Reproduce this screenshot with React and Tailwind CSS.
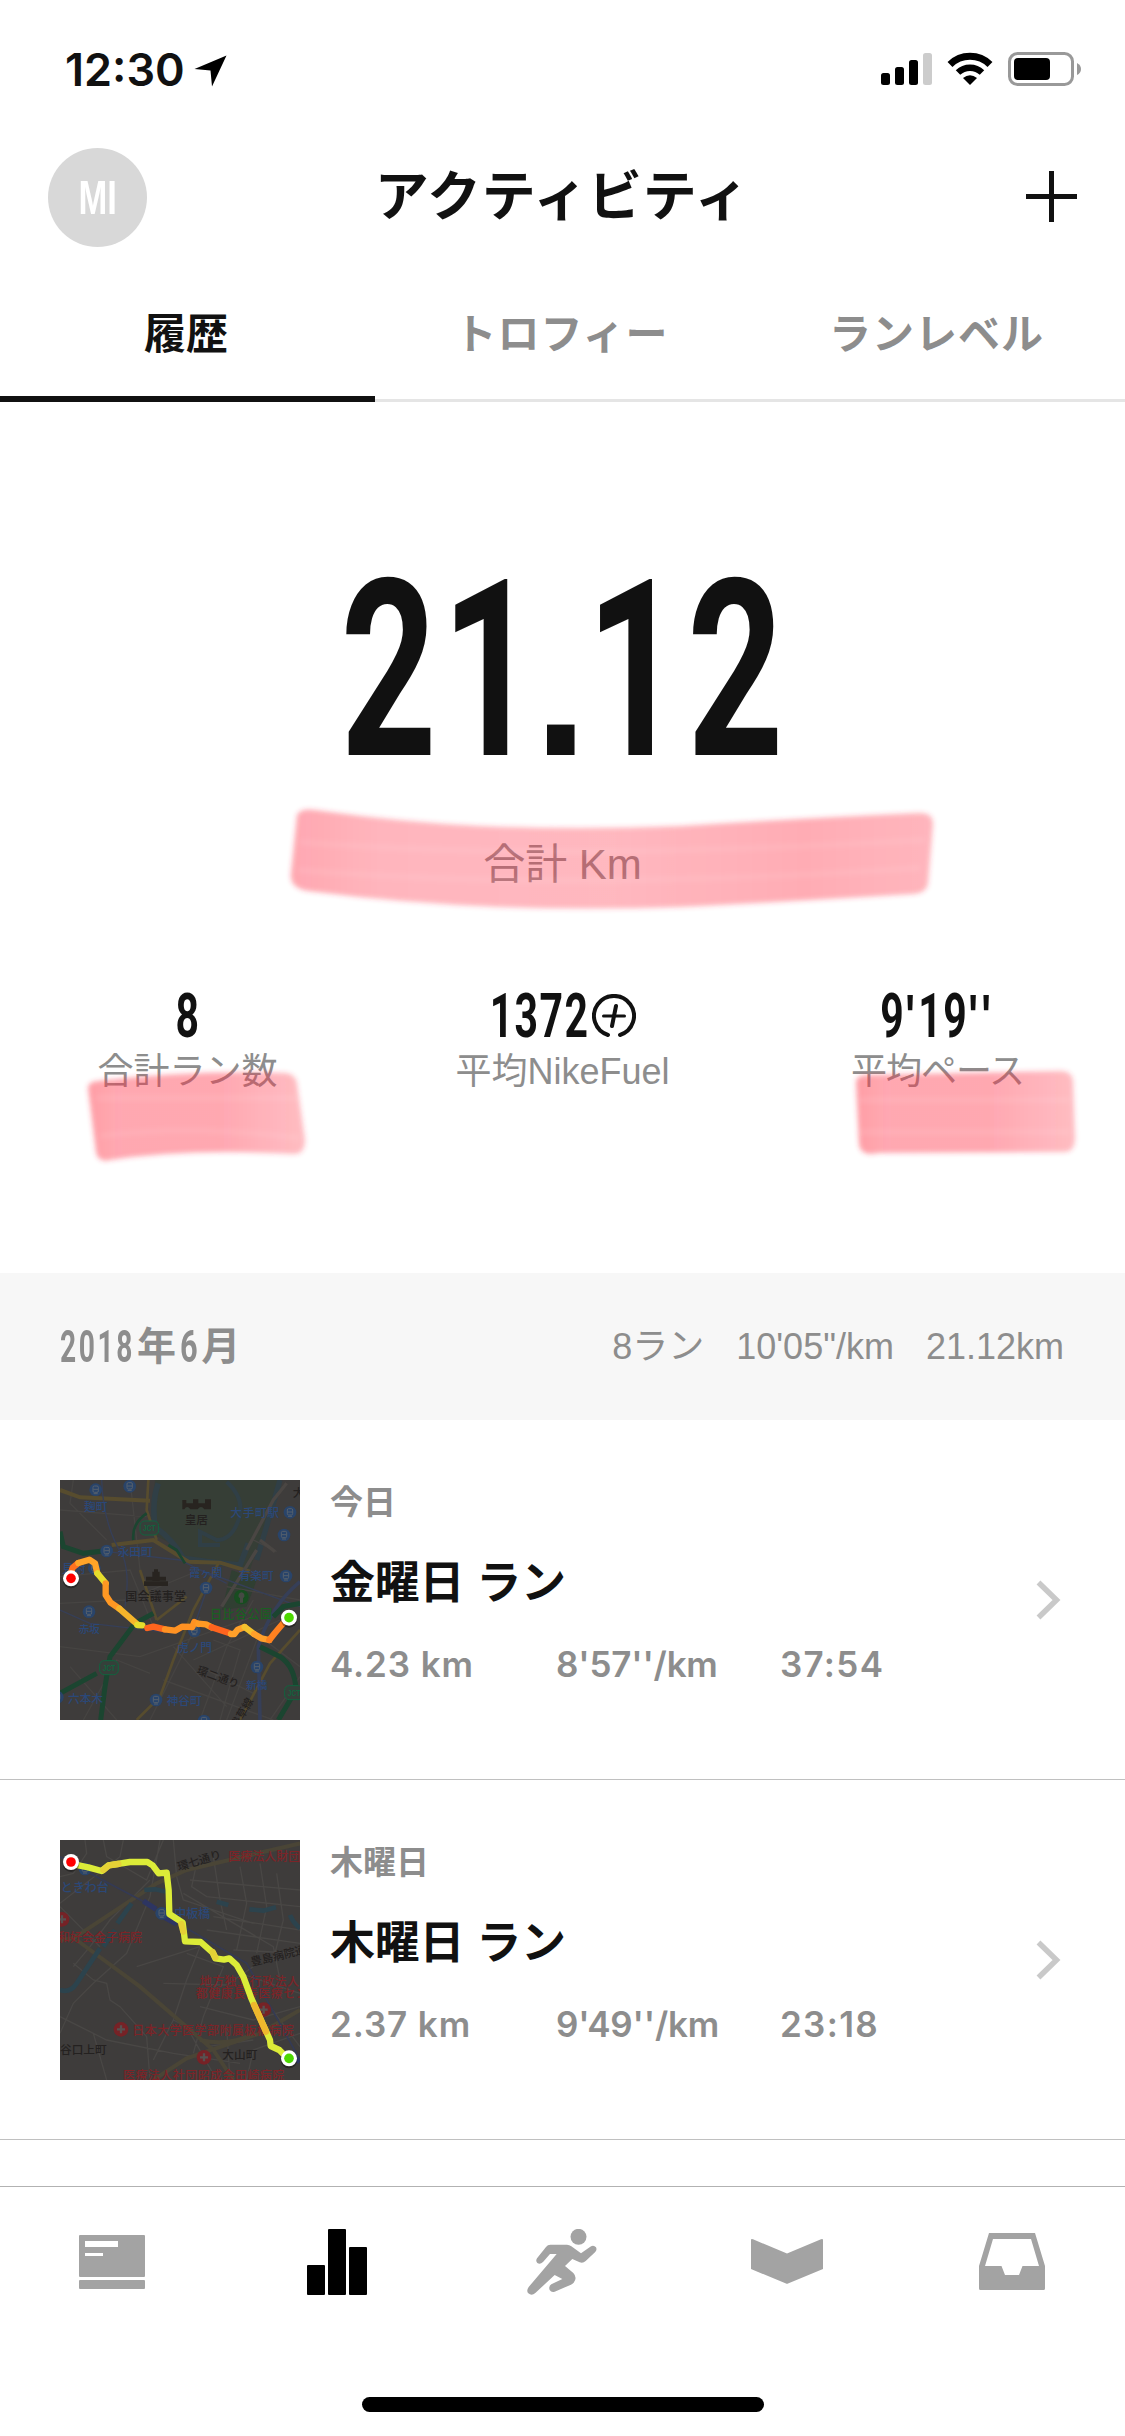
import { useState } from 'react';

const tabs = ['履歴', 'トロフィー', 'ランレベル'];

const runs = [
  { id: 1, day: '今日', title: '金曜日 ラン', distance: '4.23 km', pace: "8'57''/km", time: '37:54', Map: ChiyodaMap },
  { id: 2, day: '木曜日', title: '木曜日 ラン', distance: '2.37 km', pace: "9'49''/km", time: '23:18', Map: ItabashiMap },
];

function StatusBar() {
  return (
    <div className="flex h-[132px] shrink-0 items-center justify-between pl-[65px] pr-[42px] pt-[6px]">
      <div className="flex items-center gap-[9px]">
        <span className="font-['Inter'] text-[45px] font-semibold leading-none">12:30</span>
        <svg className="mt-[4px] h-[32px] w-[33px]" viewBox="0 0 33 32">
          <path d="M32.500 0.500L18 31.500L16.500 15.500L0.500 14z" />
        </svg>
      </div>
      <div className="flex items-center">
        <svg className="h-[34px] w-[52px]" viewBox="0 0 52 34">
          <rect x="0" y="21" width="9" height="12" rx="2.500" />
          <rect x="14" y="15" width="9" height="18" rx="2.500" />
          <rect x="28" y="8" width="9" height="25" rx="2.500" />
          <rect x="42" y="1" width="9" height="32" rx="2.500" fill="#cccccc" />
        </svg>
        <svg className="ml-[14px] h-[34px] w-[46px]" viewBox="0 0 46 34">
          <path d="M3 12.500A28.500 28.500 0 0 1 43 12.500" fill="none" stroke="#000" strokeWidth="7" />
          <path d="M11 20.500A17.500 17.500 0 0 1 35 20.500" fill="none" stroke="#000" strokeWidth="6.500" />
          <path d="M16 26Q23 20.500 30 26L23 33z" />
        </svg>
        <svg className="ml-[15px] h-[34px] w-[75px]" viewBox="0 0 75 34">
          <rect x="1.500" y="1.500" width="63" height="31" rx="8" fill="none" stroke="#999999" strokeWidth="3" />
          <rect x="6" y="6" width="36" height="22" rx="4" />
          <path d="M69 11Q73 13 73 17Q73 21 69 23z" fill="#999999" />
        </svg>
      </div>
    </div>
  );
}

function Header() {
  return (
    <header className="flex h-[132px] shrink-0 items-center justify-between px-[48px] pb-[3px]">
      <div className="mt-[2px] flex size-[99px] items-center justify-center rounded-full bg-[#d8d8d8]">
        <span className="inline-block scale-x-[0.72] text-[48px] font-bold leading-none text-white">MI</span>
      </div>
      <h1 className="pr-[1px] text-[54px] font-bold leading-none tracking-[0.8px]">アクティビティ</h1>
      <div className="flex w-[99px] justify-end">
        <svg className="size-[51px]" viewBox="0 0 51 51">
          <path d="M25.500 0V51M0 25.500H51" stroke="#111" strokeWidth="5" />
        </svg>
      </div>
    </header>
  );
}

function FuelIcon() {
  return (
    <svg className="ml-[2px] h-[44px] w-[44px]" viewBox="0 0 44 44" fill="none" stroke="#111" strokeLinecap="round">
      <path d="M16 41A20 20 0 1 1 28 41" strokeWidth="4" />
      <path d="M24 12L20 32" strokeWidth="4" />
      <path d="M11.500 22H32.500" strokeWidth="3" />
    </svg>
  );
}

function Prime({ children }) {
  return <span className="font-['Liberation_Sans'] tracking-[5px]">{children}</span>;
}

function Stat({ value, label, icon }) {
  return (
    <div className="flex w-[375px] flex-col items-center">
      <div className="flex h-[62px] items-center justify-center">
        <span className="-mx-[25px] inline-block scale-x-[0.66] whitespace-nowrap font-['Roboto'] text-[62px] font-bold leading-none tracking-[2.2px]">
          {value}
        </span>
        {icon}
      </div>
      <span className="mt-[4px] whitespace-nowrap text-[36px] leading-[42px] text-[#8d8d8d]">{label}</span>
    </div>
  );
}

// highlighter strokes laid over the labels
function Highlights() {
  return (
    <svg className="pointer-events-none absolute left-0 top-0 h-[871px] w-[1125px]" viewBox="0 402 1125 871">
      <defs>
        <linearGradient id="wide" x1="0" x2="1">
          <stop offset="0" stopColor="#ff3246" stopOpacity="0.42" />
          <stop offset="0.14" stopColor="#ff3246" stopOpacity="0.36" />
          <stop offset="0.5" stopColor="#ff3246" stopOpacity="0.35" />
          <stop offset="0.8" stopColor="#ff3246" stopOpacity="0.4" />
          <stop offset="1" stopColor="#ff3246" stopOpacity="0.36" />
        </linearGradient>
        <linearGradient id="short" x1="0" x2="1">
          <stop offset="0" stopColor="#ff3246" stopOpacity="0.48" />
          <stop offset="0.15" stopColor="#ff3246" stopOpacity="0.42" />
          <stop offset="0.6" stopColor="#ff3246" stopOpacity="0.42" />
          <stop offset="1" stopColor="#ff3246" stopOpacity="0.33" />
        </linearGradient>
        <filter id="soft">
          <feGaussianBlur stdDeviation="2.600" />
        </filter>
      </defs>
      <g filter="url(#soft)">
        <path fill="url(#wide)" d="M297 815Q301 808 315 810Q400 822 480 826Q580 830 680 826Q790 819 918 813Q933 812 933 824L928 884Q926 893 914 894Q780 902 680 907Q590 910 500 907Q400 903 308 891Q289 888 291 873z" />
        <path fill="url(#short)" d="M88 1088Q88 1082 98 1081Q190 1070 285 1073Q296 1074 297 1084L305 1140Q305 1154 294 1154Q190 1148 110 1160Q98 1163 96 1152z" />
        <path fill="url(#short)" d="M856 1082Q856 1076 866 1075L1062 1071Q1073 1072 1073 1082L1075 1138Q1075 1152 1064 1152L878 1153Q860 1157 859 1144z" />
      </g>
      <g filter="url(#soft)" stroke="#fff" strokeOpacity="0.09" fill="none" strokeWidth="5">
        <path d="M300 842Q540 862 925 840" />
        <path d="M298 870Q560 892 920 868" />
        <path d="M96 1098H298M100 1136Q190 1124 300 1138" />
        <path d="M858 1100H1070M860 1132H1070" />
      </g>
    </svg>
  );
}

function Summary() {
  return (
    <section className="relative h-[871px] shrink-0">
      <div className="flex h-[389px] justify-center pt-[144px]">
        <span className="inline-block scale-x-[0.68] pl-[6px] font-['Roboto'] text-[247px] font-bold leading-[250px] tracking-[7px]">
          21
          <span className="inline-block scale-x-[1.4] font-['Liberation_Sans'] text-[205px] leading-none">.</span>
          12
        </span>
      </div>
      <p className="mt-[48px] text-center text-[42px] leading-[52px] text-[#8d8d8d]">合計 Km</p>
      <div className="mt-[94px] flex">
        <Stat value="8" label="合計ラン数" />
        <Stat value="1372" label="平均NikeFuel" icon={<FuelIcon />} />
        <Stat
          value={<>9<Prime>'</Prime>19<Prime>''</Prime></>}
          label={<span className="tracking-[-1px]">平均ペース</span>}
        />
      </div>
      <Highlights />
    </section>
  );
}

function MonthHeader() {
  return (
    <div className="flex h-[147px] shrink-0 items-center justify-between bg-[#f7f7f7] px-[60px] text-[#8d8d8d]">
      <div className="flex items-center font-bold leading-none">
        <span className="-mr-[40px] inline-block origin-left scale-x-[0.64] font-['Roboto'] text-[44px] tracking-[4px]">2018</span>
        <span className="text-[39px]">年</span>
        <span className="-mr-[4px] ml-[4px] inline-block origin-left scale-x-[0.7] font-['Roboto'] text-[44px]">6</span>
        <span className="text-[39px]">月</span>
      </div>
      <div className="flex gap-[32px] pr-px text-[36px] leading-none">
        <span>8ラン</span>
        <span>10'05"/km</span>
        <span>21.12km</span>
      </div>
    </div>
  );
}

function Station({ x, y }) {
  return (
    <g>
      <circle cx={x} cy={y} r="19" fill="#29446a" />
      <rect x={x - 8} y={y - 11} width="16" height="19" rx="4" fill="none" stroke="#56616d" strokeWidth="3" />
      <path d={`M${x - 7} ${y - 1}h14M${x - 6} ${y + 12}h12`} stroke="#56616d" strokeWidth="3" />
    </g>
  );
}

function Junction({ x, y }) {
  return (
    <g>
      <rect x={x - 28} y={y - 21} width="56" height="42" rx="14" fill="#35403a" stroke="#12633e" strokeWidth="3" />
      <text x={x} y={y + 9} textAnchor="middle" fontSize="25" fontWeight="700" fill="#12633e" textLength="38" lengthAdjust="spacingAndGlyphs">JCT</text>
    </g>
  );
}

function Hospital({ x, y }) {
  return (
    <g>
      <circle cx={x} cy={y} r="22" fill="#762226" />
      <path d={`M${x - 12} ${y}h24M${x} ${y - 12}v24`} stroke="#575150" strokeWidth="7" />
    </g>
  );
}

function Pin({ x, y, color }) {
  return (
    <g>
      <circle cx={x} cy={y + 5} r="25" fill="#000" opacity="0.35" />
      <circle cx={x} cy={y} r="24" fill="#fff" />
      <circle cx={x} cy={y} r="14.500" fill={color} />
    </g>
  );
}

function ChiyodaMap() {
  return (
    <svg className="size-[240px] shrink-0" viewBox="60 60 720 720">
      <rect x="60" y="60" width="720" height="720" fill="#3e3c3b" />
      <path d="M345 60H720L690 140L630 330L560 310L440 305L400 255L345 225L335 150z" fill="#363e36" />
      <path d="M355 70Q335 120 345 200Q400 240 430 295L500 305L600 315L625 250" fill="none" stroke="#303f46" strokeWidth="17" />
      <path d="M560 65Q610 110 600 165Q580 240 530 240L480 215V255H540" fill="none" stroke="#303f46" strokeWidth="12" />
      <path d="M650 300L700 130L720 60" fill="none" stroke="#303f46" strokeWidth="16" />
      <path d="M575 330L650 360L620 440L545 450z" fill="#303f32" />
      <g fill="none" stroke="#464442" strokeWidth="4">
        <path d="M60 150L320 170M100 60L90 130L200 240M60 350L270 330L340 500M60 430L260 420L480 330M130 780L230 600L330 640M60 560L300 590L640 470M330 780L420 600L480 470M480 780L560 560L640 420M560 780L650 540M370 660L700 780M480 620L640 700M620 500L780 620M690 780L780 650M640 240L710 275M560 380L780 420M460 600L720 480M400 560L560 740M270 60L300 330M90 620L230 780M520 540L600 570L540 780" />
      </g>
      <g fill="none" stroke="#574c2e" strokeWidth="8">
        <path d="M60 90L120 112L330 122M215 255L340 240L445 305L540 308L630 335" strokeWidth="12" />
        <path d="M325 60L320 150L350 240M300 330L350 480M535 310L460 450L400 600L360 710L290 780M780 510L690 610L600 780M350 480L440 410" />
      </g>
      <path d="M620 270L700 120L740 70M545 440L650 270M660 240L705 275" fill="none" stroke="#4a4643" strokeWidth="10" />
      <g fill="none" stroke="#363f58" strokeWidth="4">
        <path d="M185 60Q190 200 250 290Q270 350 255 440M200 275L420 300L560 370M60 450L150 490L410 520M480 330L780 440M500 390L455 520" />
        <path d="M780 365Q690 440 655 560L660 780" strokeWidth="11" />
      </g>
      <g fill="none" stroke="#1b4530" strokeWidth="15">
        <path d="M60 215L70 260L130 280L215 270M340 460L285 490L210 590L195 680L182 780M60 700L170 640M660 560L720 590Q765 620 768 690L715 780M780 430L730 440L700 470" />
        <path d="M385 255L410 270L435 310M280 240Q275 190 320 160" strokeWidth="8" />
      </g>
      <g fill="#282420">
        <path d="M427 120h12v10h20v-12h16v12h20v-12h18v30h-20q-10-14-20 0h-22q-10-14-18 0h-6z" />
        <path d="M312 364h72v14h-72zM318 350h60v12h-60zM337 335h22v28h-22zM342 328h12v8h-12z" />
      </g>
      <Station x={167} y={89} />
      <Station x={269} y={79} />
      <Station x={750} y={157} />
      <Station x={732} y={225} />
      <Station x={200} y={273} />
      <Station x={738} y={348} />
      <Station x={498} y={384} />
      <Station x={147} y={455} />
      <Station x={463} y={512} />
      <Station x={651} y={621} />
      <Station x={348} y={720} />
      <Station x={492} y={783} />
      <Station x={52} y={712} />
      <Station x={163} y={325} />
      <Junction x={328} y={204} />
      <Junction x={207} y={623} />
      <Junction x={762} y={698} />
      <circle cx="604" cy="411" r="22" fill="#184d20" />
      <path d="M604 397a11 10 0 0 1 5 18v13h-9v-13a11 10 0 0 1 4-18" fill="#454a44" />
      <g fontSize="35" fill="#2b4878" className="font-medium">
        <text x="132" y="153">麹町</text>
        <text x="571" y="171" textLength="146">大手町駅</text>
        <text x="233" y="289">永田町</text>
        <text x="66" y="338">見附</text>
        <text x="448" y="352" fontSize="33">霞ヶ関</text>
        <text x="596" y="361">有楽町</text>
        <text x="116" y="519" fontSize="32">赤坂</text>
        <text x="411" y="576">虎ノ門</text>
        <text x="618" y="687" fontSize="32">新橋</text>
        <text x="84" y="728">六本木</text>
        <text x="380" y="734">神谷町</text>
      </g>
      <g fontSize="35" fill="#242120" className="font-medium">
        <text x="434" y="193">皇居</text>
        <text x="256" y="423" fontSize="36" textLength="182">国会議事堂</text>
        <text x="758" y="110">大</text>
        <text transform="translate(468 640) rotate(20)" fontSize="33">環二通り</text>
        <text transform="translate(592 808) rotate(-60)" fontSize="33">浅草線</text>
      </g>
      <text x="510" y="477" fontSize="36" textLength="186" fill="#1a5f22" className="font-medium">日比谷公園</text>
      <g fill="none" strokeWidth="19" strokeLinejoin="round" strokeLinecap="round">
        <path d="M92 342L98 323L115 309" stroke="#ff711f" />
        <path d="M115 309L148 299L165 310L172 340" stroke="#ffa428" />
        <path d="M172 340L197 370" stroke="#e5dd2d" />
        <path d="M197 370V405L212 428L238 446" stroke="#ff9823" />
        <path d="M238 446L292 493" stroke="#f6b52b" />
        <path d="M292 495L307 496" stroke="#e5dd2d" />
        <path d="M322 504L340 500L375 508" stroke="#ff641e" />
        <path d="M375 508L405 512L426 500L457 501L463 486L475 492" stroke="#ff9222" />
        <path d="M475 491L498 493L515 502" stroke="#ff9a23" />
        <path d="M515 502L565 518" stroke="#ff641e" />
        <path d="M573 522H583L593 509L614 501" stroke="#ffa02a" />
        <path d="M614 501L642 522" stroke="#f2c12e" />
        <path d="M642 522L664 535L688 540" stroke="#ffa02a" />
        <path d="M688 540L704 520L735 483" stroke="#ff8120" />
      </g>
      <Pin x={93} y={355} color="#ff0000" />
      <Pin x={747} y={473} color="#4cd800" />
    </svg>
  );
}

function ItabashiMap() {
  return (
    <svg className="size-[240px] shrink-0" viewBox="60 60 720 720">
      <rect x="60" y="60" width="720" height="720" fill="#3e3c3b" />
      <g fill="none" stroke="#494745" strokeWidth="4">
        <path d="M135 60L140 100L100 160L60 170M190 60L200 110L320 180L370 60M250 60L240 110L60 250M60 260L180 380M100 440L150 380L210 300L330 180M400 60L410 170L430 240L640 310M470 130L455 200L500 230L780 260M450 180L780 210M430 220L700 380L720 480M520 110L540 240L560 330M600 140L620 250L590 390M660 130L680 260L650 400M710 160L730 300L700 420M520 290L780 330M500 330L780 370M580 390L780 400M100 430L160 480L200 490L210 540L240 560L320 650L330 780M360 60L330 230L260 400L160 490L100 550L60 640M290 440L480 380L440 480L400 600L340 720M370 490L560 495L640 440M440 400L550 440L490 590L460 700M60 590L200 660L400 700L600 730M600 460L780 520M480 560L640 600L780 560M560 620L570 780M620 780L640 690L780 640M690 560L780 680M160 640L200 780M400 600L440 620L530 780M500 680L640 660" />
      </g>
      <g fill="none" stroke="#4a4536" strokeWidth="12">
        <path d="M60 360L100 355L350 190L440 150L780 70M110 360L300 500L520 690L580 780M340 780L440 715L660 640L780 570M480 660Q570 680 640 640" />
      </g>
      <g fill="none" stroke="#2c434d" strokeWidth="14" strokeLinejoin="round">
        <path d="M60 510Q90 520 110 490L180 385M190 380L225 330M232 310L275 250M313 210L345 208L380 215M530 245L565 255M628 268L670 272L708 262M750 285Q760 310 780 325" />
      </g>
      <path d="M60 110L150 160L320 250L440 325L620 430L780 720" fill="none" stroke="#343a54" strokeWidth="5" />
      <path d="M310 243L348 268M370 290L410 312M750 708L780 724" stroke="#2d3562" strokeWidth="16" />
      <Station x={135} y={147} />
      <Station x={365} y={280} />
      <Hospital x={66} y={298} />
      <Hospital x={671} y={569} />
      <Hospital x={243} y={628} />
      <Hospital x={492} y={712} />
      <g fontSize="36" fill="#2b4878" className="font-medium">
        <text x="62" y="215">ときわ台</text>
        <text x="403" y="294">中板橋</text>
      </g>
      <g fontSize="36" fill="#7c2428" className="font-medium">
        <text x="565" y="122">医療法人財団</text>
        <text x="54" y="365">和好会金子病院</text>
        <text x="479" y="498" textLength="298">地方独立行政法人</text>
        <text x="467" y="535" textLength="336">都健康長寿医療セン</text>
        <text x="277" y="645" textLength="484">日本大学医学部附属板橋病院</text>
        <text x="249" y="780" textLength="484">医療法人社団昭成会田崎病院</text>
      </g>
      <g fontSize="35" fill="#242120" className="font-medium">
        <text x="60" y="703">谷口上町</text>
        <text x="547" y="718">大山町</text>
        <text transform="translate(416 153) rotate(-17)" fontSize="34">環七通り</text>
        <text transform="translate(635 438) rotate(-13)" fontSize="34">豊島病院通り</text>
      </g>
      <g fill="none" strokeWidth="19" strokeLinejoin="round" strokeLinecap="round">
        <path d="M105 134L145 142L185 153L205 136L270 126H322L338 136L356 160L380 158L386 210L388 282L428 308L435 364L482 366L518 398L526 415L552 419L568 415L590 435L610 470L634 535L690 660L692 678L718 690L735 707" stroke="#dcec38" />
        <path d="M190 150L207 136L235 132M424 312L430 335M518 396L526 412" stroke="#e5d136" />
        <path d="M642 555L678 635" stroke="#eeb82d" />
      </g>
      <Pin x={93} y={126} color="#ff0000" />
      <Pin x={747} y={715} color="#4cd800" />
    </svg>
  );
}

function RunRow({ run }) {
  const { Map } = run;
  return (
    <li className="flex h-[360px] shrink-0 items-start border-b border-[#c0c0c0] pl-[60px] pr-[64px] pt-[60px]">
      <Map />
      <div className="ml-[30px] flex flex-1 flex-col">
        <span className="mt-[2px] text-[33px] font-bold leading-[42px] text-[#8d8d8d]">{run.day}</span>
        <h3 className="mt-[33px] text-[45px] font-bold leading-[54px] tracking-[-0.3px]">{run.title}</h3>
        <div className="mt-[31px] flex font-['Inter'] text-[35px] font-semibold leading-[44px] tracking-[0.9px] text-[#8d8d8d]">
          <span className="w-[226px]">{run.distance}</span>
          <span className="w-[224px] tracking-[-0.2px]">{run.pace}</span>
          <span className="tracking-[1.3px]">{run.time}</span>
        </div>
      </div>
      <svg className="mt-[100px] h-[40px] w-[25px]" viewBox="0 0 25 40">
        <path d="M2.500 2.500L20.500 20L2.500 37.500" fill="none" stroke="#c9c9c9" strokeWidth="5.500" />
      </svg>
    </li>
  );
}

function TabBar() {
  return (
    <nav className="flex h-[250px] shrink-0 flex-col items-center justify-between border-t border-[#b2b2b2] bg-white pb-[24px] pt-[42px]">
      <div className="flex h-[68px] w-full pr-px text-[#a3a3a3]">
        <div className="flex w-1/5 justify-center">
          <svg className="h-[68px] w-[66px]" viewBox="79 2229 66 68" fill="currentColor">
            <rect x="79" y="2235" width="66" height="42" rx="1" />
            <rect x="79" y="2280" width="66" height="9" rx="1" />
            <path d="M85 2241h33v6h-33zM85 2253h18v3h-18z" fill="#fff" />
          </svg>
        </div>
        <div className="flex w-1/5 justify-center">
          <svg className="h-[68px] w-[60px]" viewBox="307 2229 60 68" fill="#000">
            <rect x="307" y="2265" width="18" height="30" rx="1" />
            <rect x="328" y="2229" width="18" height="66" rx="1" />
            <rect x="349" y="2247" width="18" height="48" rx="1" />
          </svg>
        </div>
        <div className="flex w-1/5 justify-center">
          <svg className="h-[68px] w-[70px]" viewBox="80 57 210 204" fill="currentColor">
            <circle cx="234.500" cy="80.500" r="24" />
            <path d="M150 104H200Q207 104 213 109L242 130L270 110Q280 103 287 112Q291 120 284 127L256 153Q248 161 238 157L216 147L194 168L219 189Q232 203 220 218Q217 221 212 224L163 245Q153 248 148 240Q144 229 153 223L186 207L163 195L105 249Q94 259 84 250Q77 242 85 231L169 132H149L128 156Q119 165 111 159Q105 153 110 145L137 111Q142 104 150 104z" />
          </svg>
        </div>
        <div className="flex w-1/5 justify-center">
          <svg className="h-[68px] w-[72px]" viewBox="751 2229 72 68" fill="currentColor">
            <path d="M751 2240Q751 2238.500 753 2239.300L787 2253.500L821 2239.300Q823 2238.500 823 2240V2269L788 2283.500Q787 2284 786 2283.500L751 2269z" />
          </svg>
        </div>
        <div className="flex w-1/5 justify-center">
          <svg className="h-[68px] w-[66px]" viewBox="979 2229 66 68" fill="currentColor">
            <path fillRule="evenodd" d="M989 2233H1035L1045 2266V2288.500Q1045 2290 1043.500 2290H980.500Q979 2290 979 2288.500V2266zM993 2239L985 2266H1001.500L1005 2275H1019L1022.500 2266H1039L1031 2239z" />
          </svg>
        </div>
      </div>
      <div className="h-[15px] w-[402px] rounded-full bg-black" />
    </nav>
  );
}

export default function App() {
  const [activeTab, setActiveTab] = useState('履歴');

  return (
    <div className="flex h-[2436px] w-[1125px] flex-col overflow-hidden bg-white font-['Liberation_Sans','Noto_Sans_CJK_JP',sans-serif] text-[#111]">
      <StatusBar />
      <Header />
      <div className="flex h-[138px] shrink-0 shadow-[inset_0_-3px_0_#e5e5e5]">
        {tabs.map((tab) => (
          <button
            key={tab}
            onClick={() => setActiveTab(tab)}
            className={`flex w-[375px] items-center justify-center border-b-6 pt-[9px] text-[42px] font-bold leading-none ${
              activeTab === tab ? 'border-[#111] pr-[3px] text-[#111]' : 'border-transparent pr-[2px] tracking-[1px] text-[#8d8d8d]'
            }`}
          >
            {tab}
          </button>
        ))}
      </div>
      <Summary />
      <MonthHeader />
      <ul className="flex min-h-0 flex-1 flex-col overflow-hidden">
        {runs.map((run) => (
          <RunRow key={run.id} run={run} />
        ))}
      </ul>
      <TabBar />
    </div>
  );
}
